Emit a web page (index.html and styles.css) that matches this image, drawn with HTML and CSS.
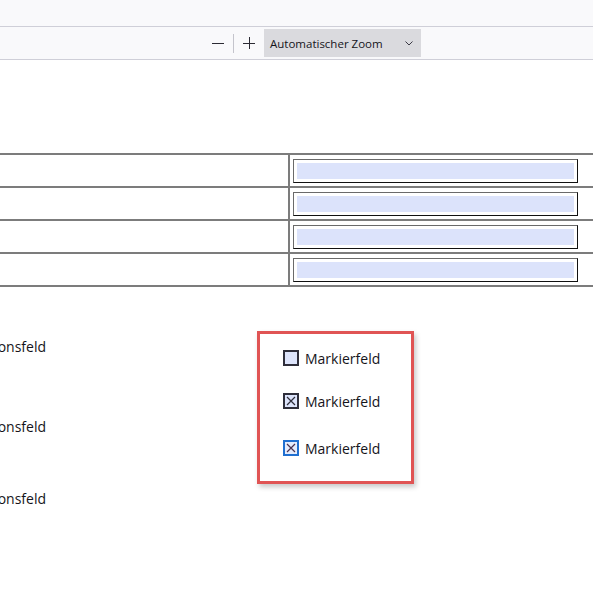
FILE: index.html
```html
<!DOCTYPE html>
<html lang="de">
<head>
<meta charset="utf-8">
<title>PDF Formular</title>
<link rel="stylesheet" href="styles.css">
</head>
<body>
<div class="topbar"></div>
<div class="toolbar">
  <button class="tbtn tbtn-first" aria-label="Verkleinern">
    <svg width="12" height="12" viewBox="0 0 12 12"><path d="M0 6.5H12" stroke="#2b2a33" stroke-width="1"/></svg>
  </button>
  <span class="tsep"></span>
  <button class="tbtn" aria-label="Vergrößern">
    <svg width="12" height="12" viewBox="0 0 12 12"><path d="M0 6.5H12M6.5 0V12" stroke="#2b2a33" stroke-width="1"/></svg>
  </button>
  <div class="zoomselect">
    <span class="zoomlabel">Automatischer Zoom</span>
    <svg class="chev" width="8" height="5" viewBox="0 0 8 5"><path d="M0.5 0.5L4 4L7.5 0.5" fill="none" stroke="#3a3944" stroke-width="1"/></svg>
  </div>
</div>

<div class="page">
  <div class="formtable">
    <div class="frow"><div class="fcell-left"></div><div class="fcell-right"><div class="field"><div class="field-fill"></div></div></div></div>
    <div class="frow"><div class="fcell-left"></div><div class="fcell-right"><div class="field"><div class="field-fill"></div></div></div></div>
    <div class="frow"><div class="fcell-left"></div><div class="fcell-right"><div class="field"><div class="field-fill"></div></div></div></div>
    <div class="frow frow-last"><div class="fcell-left"></div><div class="fcell-right"><div class="field"><div class="field-fill"></div></div></div></div>
  </div>

  <div class="lower">
    <div class="radios">
      <div class="rlabel r1"><span>Optionsfeld</span></div>
      <div class="rlabel r2"><span>Optionsfeld</span></div>
      <div class="rlabel r3"><span>Optionsfeld</span></div>
    </div>
    <div class="checkgroup">
      <div class="crow c1">
        <svg class="cb" width="16" height="16" viewBox="0 0 16 16"><rect x="1" y="1" width="14" height="14" fill="#dde4fb" stroke="#2e2e3a" stroke-width="2"/></svg>
        <span>Markierfeld</span>
      </div>
      <div class="crow c2">
        <svg class="cb" width="16" height="16" viewBox="0 0 16 16"><rect x="1" y="1" width="14" height="14" fill="#dde4fb" stroke="#2e2e3a" stroke-width="2"/><path d="M4 4L12 12M12 4L4 12" stroke="#2e2e3a" stroke-width="1.2"/></svg>
        <span>Markierfeld</span>
      </div>
      <div class="crow c3">
        <svg class="cb" width="16" height="16" viewBox="0 0 16 16"><rect x="1" y="1" width="14" height="14" fill="#e4ebfc" stroke="#1f6fd0" stroke-width="2"/><path d="M4 4L12 12M12 4L4 12" stroke="#4a3350" stroke-width="1.2"/></svg>
        <span>Markierfeld</span>
      </div>
    </div>
  </div>
</div>
</body>
</html>
```

FILE: styles.css
```css
html, body {
  margin: 0;
  padding: 0;
  background: #ffffff;
  font-family: "Open Sans", "Noto Sans", sans-serif;
  color: #15141a;
  overflow: hidden;
}

.topbar {
  height: 26px;
  background: #f9f9fb;
  border-bottom: 1px solid #cfcfd8;
}

.toolbar {
  height: 32px;
  background: #f9f9fb;
  border-bottom: 1px solid #cfcfd8;
  display: flex;
  align-items: center;
}

.tbtn {
  width: 24px;
  height: 24px;
  padding: 0;
  margin: 0 0 0 3px;
  border: 0;
  background: transparent;
  display: flex;
  align-items: center;
  justify-content: center;
}
.tbtn svg { display: block; }
.tbtn-first { margin-left: 206px; }

.tsep {
  width: 1px;
  height: 19px;
  background: #c4c4cc;
  margin-left: 3px;
}

.zoomselect {
  margin-left: 3px;
  width: 157px;
  height: 28px;
  background: #dadade;
  display: flex;
  align-items: center;
  box-sizing: border-box;
  padding-left: 6px;
}
.zoomlabel {
  font-size: 11.5px;
  color: #15141a;
  white-space: nowrap;
  flex: 1;
}
.chev {
  display: block;
  margin-right: 8px;
}

.page {
  padding-top: 93px;
}

.formtable {
  width: 620px;
}
.frow {
  display: flex;
  height: 31px;
  border-top: 2px solid #7c7c7c;
}
.frow-last {
  border-bottom: 2px solid #7c7c7c;
}
.fcell-left {
  width: 288px;
  border-right: 2px solid #7c7c7c;
  flex-shrink: 0;
}
.fcell-right {
  display: flex;
  align-items: center;
  padding-left: 3px;
}
.field {
  width: 285px;
  height: 24px;
  box-sizing: border-box;
  border: 1px solid #111;
  border-top-color: #6a6a6a;
  border-left-color: #6a6a6a;
  padding: 3px;
}
.field-fill {
  height: 100%;
  background: #dce3fb;
}

.lower {
  display: flex;
  align-items: flex-start;
}

.radios {
  width: 46px;
  display: flex;
  flex-direction: column;
  flex-shrink: 0;
}
.rlabel {
  display: flex;
  justify-content: flex-end;
  overflow: hidden;
  white-space: nowrap;
  font-size: 14px;
  line-height: 20px;
  color: #15141a;
}
.rlabel span { flex-shrink: 0; }
.r1 { margin-top: 50px; }
.r2 { margin-top: 60px; }
.r3 { margin-top: 52px; }

.checkgroup {
  margin-left: 211px;
  margin-top: 44px;
  width: 157px;
  height: 153px;
  box-sizing: border-box;
  border: 3px solid #e05454;
  box-shadow: 2px 3px 5px rgba(0, 0, 0, 0.22);
  padding: 14px 0 0 23px;
  display: flex;
  flex-direction: column;
}
.crow {
  display: flex;
  align-items: center;
  height: 20px;
  font-size: 14px;
  color: #15141a;
}
.crow .cb {
  display: block;
  margin-right: 6px;
  margin-top: 0;
}
.c2 { margin-top: 23px; }
.c3 { margin-top: 27px; }
```
